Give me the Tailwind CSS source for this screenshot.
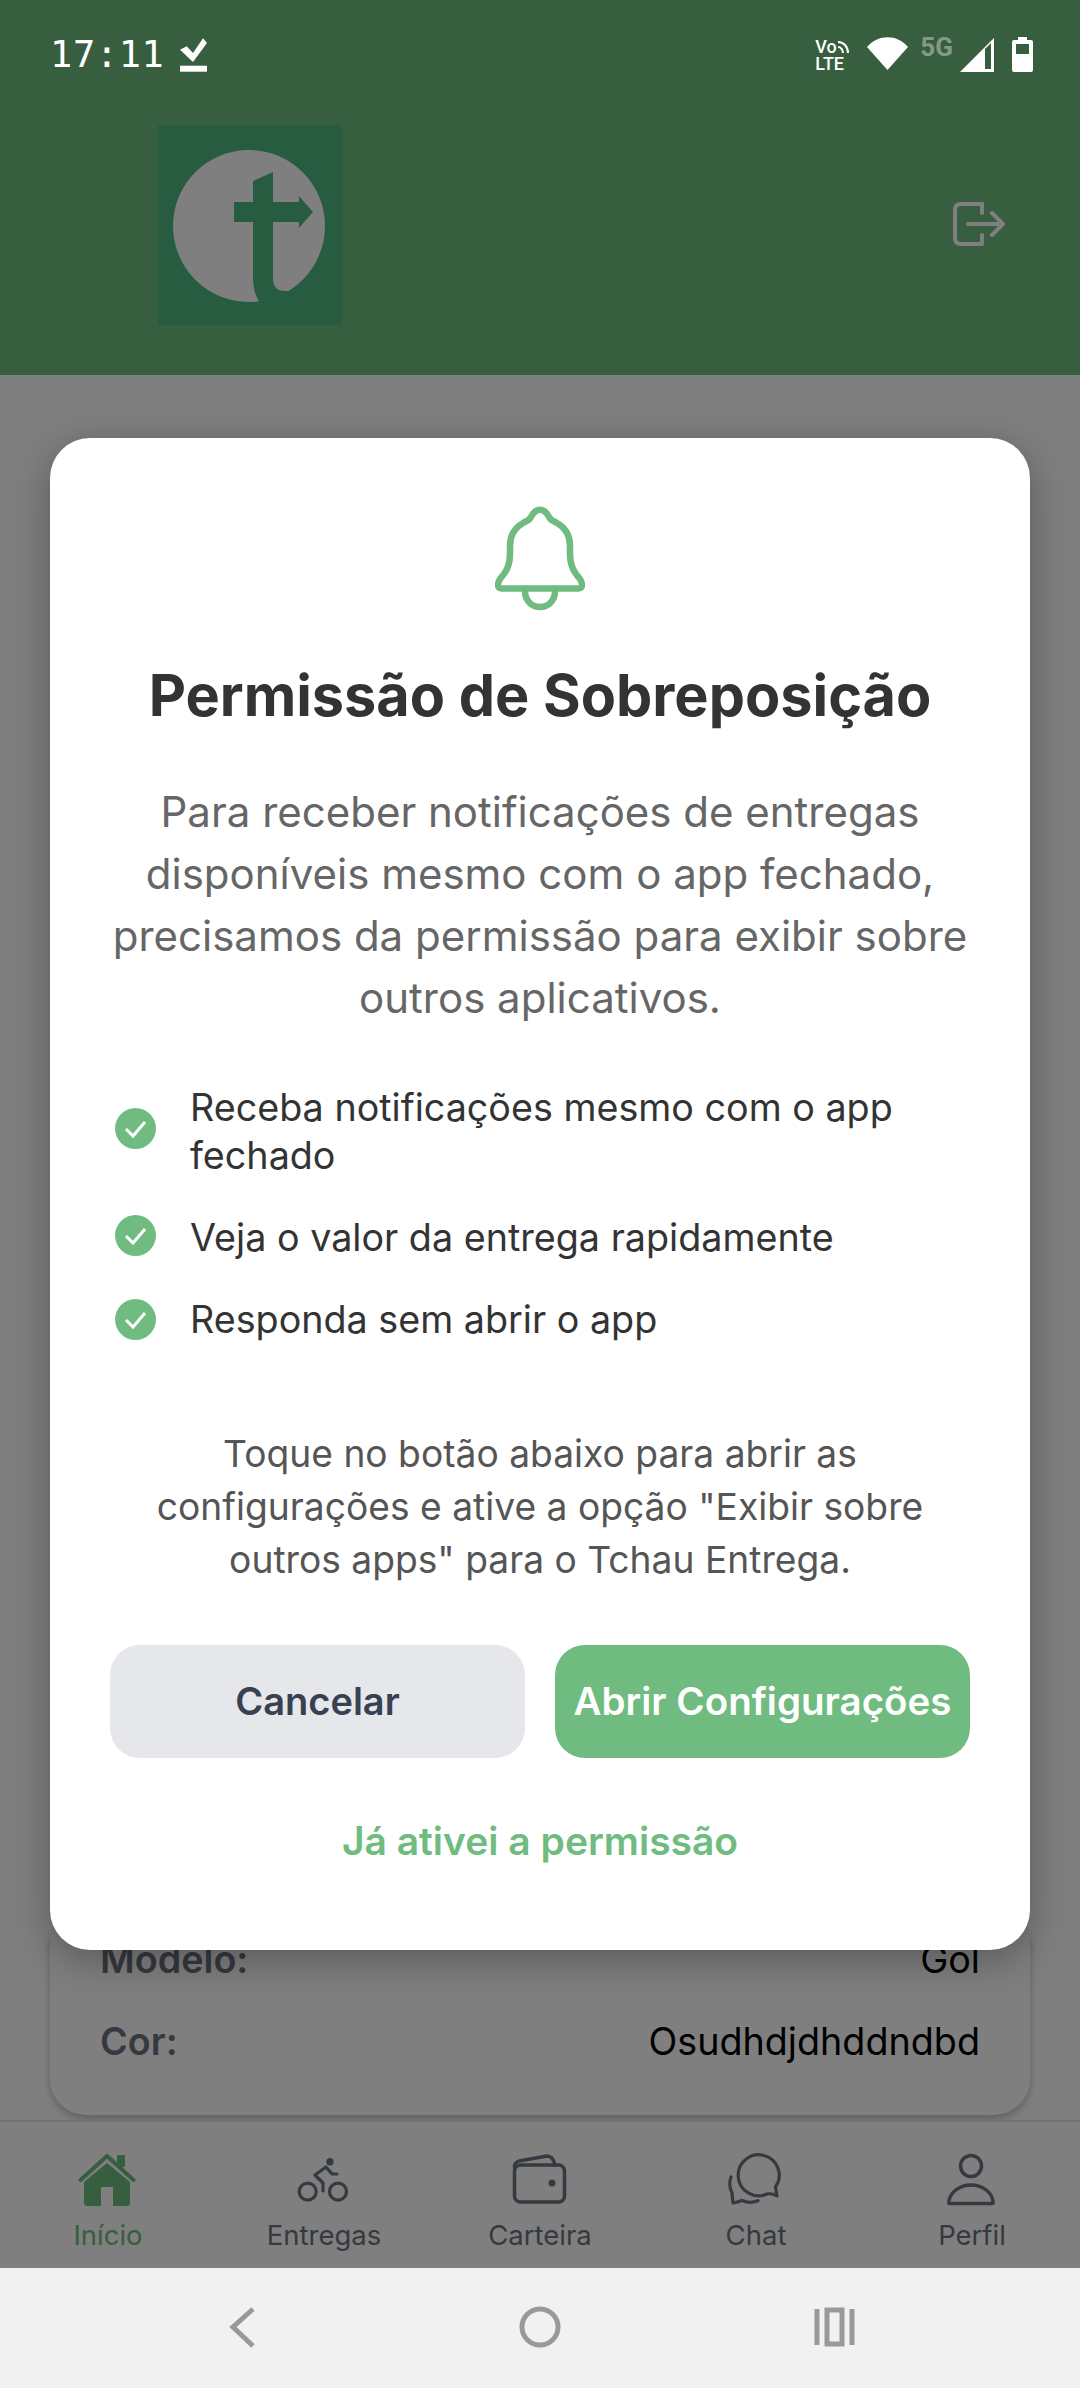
<!DOCTYPE html>
<html lang="pt-BR">
<head>
  <meta charset="UTF-8" />
  <meta name="viewport" content="width=device-width, initial-scale=1.0" />
  <title>Tchau Entrega</title>
  <script src="https://cdn.jsdelivr.net/npm/@tailwindcss/browser@4"></script>
</head>
<body class="bg-white font-['Inter',sans-serif]">
<div class="relative w-[1080px] h-[2388px] overflow-hidden flex flex-col bg-white">

  <!-- header -->
  <header class="h-[375px] shrink-0 bg-[#70bc80] flex items-start justify-between pl-[158px] pr-[75px] pt-[125px]">
    <svg class="w-[184px] h-[200px]" viewBox="0 0 184 200">
      <rect width="184" height="200" fill="#50b882"/>
      <circle cx="91" cy="101" r="76" fill="#ffffff"/>
      <path d="M95 56 L115 47 V77 H141 V71 L155 87 L141 103 V97 H115 V153 Q115 166 127 166 L140 166 L140 190 L102 190 L102 177 Q95 170 95 150 V97 H76 V77 H95 Z" fill="#50b882"/>
    </svg>
    <svg class="w-[52px] h-[44px] mt-[77px]" viewBox="0 0 52 44" fill="none" stroke="#ffffff" stroke-width="4" stroke-linecap="round" stroke-linejoin="round">
      <path d="M29 2 H8 Q2 2 2 8 V36 Q2 42 8 42 H29 V33"/>
      <path d="M29 2 V11"/>
      <path d="M15 22 H49 M39 11 L50 22 L39 33"/>
    </svg>
  </header>

  <!-- page behind the dialog -->
  <main class="flex-1 flex flex-col justify-end overflow-hidden bg-white px-[50px] pb-[5px]">
    <div class="rounded-b-[36px] bg-white shadow-[0_4px_8px_rgba(0,0,0,0.25)] px-[50px] pb-[50px] flex flex-col gap-[34px]">
      <div class="flex justify-between text-[37.7px] leading-[48px]">
        <span class="font-semibold text-[#6b7280]">Modelo:</span>
        <span class="text-black">Gol</span>
      </div>
      <div class="flex justify-between text-[37.7px] leading-[48px]">
        <span class="font-semibold text-[#6b7280]">Cor:</span>
        <span class="text-black">Osudhdjdhddndbd</span>
      </div>
    </div>
  </main>

  <!-- tab bar -->
  <nav class="h-[148px] shrink-0 bg-white border-t-2 border-[#e5e7eb] grid grid-cols-5 text-[27.5px] leading-[34px] text-[#6b7280]">
    <div class="flex flex-col items-center pt-[31px] gap-[9px] text-[#70bc80]">
      <svg class="w-[60px] h-[56px]" viewBox="0 0 60 56" fill="#70bc80">
        <path d="M2.5 27 L29 3 L55.5 27" fill="none" stroke="#70bc80" stroke-width="4" stroke-linecap="round" stroke-linejoin="round"/>
        <rect x="39" y="2" width="8" height="12" rx="1"/>
        <path d="M6 29 L29 10 L52 29 V50 Q52 53 49 53 H35 V34 H23 V53 H9 Q6 53 6 50 Z"/>
      </svg>
      <span>Início</span>
    </div>
    <div class="flex flex-col items-center pt-[31px] gap-[9px]">
      <svg class="w-[56px] h-[56px]" viewBox="0 0 56 56" fill="none" stroke="#6b7280" stroke-width="3.2" stroke-linecap="round" stroke-linejoin="round">
        <circle cx="11.7" cy="38.7" r="8.5"/>
        <circle cx="42" cy="38.7" r="8.5"/>
        <path d="M27 38 V30 L19 22 L30 14 L36 21 H41"/>
        <circle cx="34" cy="8.7" r="3.7" fill="#6b7280" stroke="none"/>
      </svg>
      <span>Entregas</span>
    </div>
    <div class="flex flex-col items-center pt-[31px] gap-[9px]">
      <svg class="w-[56px] h-[56px]" viewBox="0 0 56 56" fill="none" stroke="#6b7280" stroke-width="3.5" stroke-linejoin="round" stroke-linecap="round">
        <path d="M2.5 14 Q2 10 7 8 L35 3 Q41 3 43 12"/>
        <rect x="2.5" y="12" width="50" height="37" rx="6"/>
        <circle cx="40" cy="30" r="3.5" fill="#6b7280" stroke="none"/>
      </svg>
      <span>Carteira</span>
    </div>
    <div class="flex flex-col items-center pt-[31px] gap-[9px]">
      <svg class="w-[56px] h-[56px]" viewBox="0 0 56 56" fill="none" stroke="#6b7280" stroke-width="3.2" stroke-linejoin="round" stroke-linecap="round">
        <path d="M47.5 34 A20.5 20.5 0 1 0 39 41 Q44 40 49 43 Z"/>
        <path d="M3 24 Q0 32 4 40 L5 50 Q10 49 14 47.5 Q22 51 30 47.7"/>
      </svg>
      <span>Chat</span>
    </div>
    <div class="flex flex-col items-center pt-[31px] gap-[9px]">
      <svg class="w-[52px] h-[56px]" viewBox="0 0 52 56" fill="none" stroke="#6b7280" stroke-width="3.5" stroke-linejoin="round">
        <circle cx="25" cy="13" r="10.5"/>
        <path d="M2.8 50 C3 40 13 32 25 32 C37 32 47 40 47.2 50 Q47 50.5 46 50.5 H4 Q3 50.5 2.8 50 Z"/>
      </svg>
      <span>Perfil</span>
    </div>
  </nav>

  <!-- android nav bar -->
  <div class="relative z-20 h-[120px] shrink-0 bg-[#f1f1f1] flex items-center justify-center pb-[2px]">
    <svg class="w-[640px] h-[44px]" viewBox="0 0 640 44" fill="none" stroke="#999999" stroke-width="5">
      <path d="M33 4 L13 22 L33 41"/>
      <circle cx="320" cy="22" r="18"/>
      <path d="M597 4 V40 M632 4 V40"/>
      <rect x="607" y="5" width="15" height="34"/>
    </svg>
  </div>

  <!-- dim overlay + dialog -->
  <div class="absolute inset-0 z-10 bg-black/50 flex items-center justify-center">
    <section class="w-[980px] h-[1512px] bg-white rounded-[40px] shadow-[0_10px_40px_rgba(0,0,0,0.3)] px-[60px] pt-[66px] flex flex-col items-center">
      <svg class="w-[90px] h-[107px] shrink-0" viewBox="0 0 90 107" fill="none" stroke="#70bc80" stroke-width="6.5" stroke-linejoin="round" stroke-linecap="round">
        <path d="M45 5.7 C40 5.7 38 9 36 13 C34 17 31 17 28 19 C19 24 15 32 15 42 V50 C15 62 11 68 5 75 Q0 84 7 84.5 H83 Q90 84 85 75 C79 68 75 62 75 50 V42 C75 32 71 24 62 19 C59 17 56 17 54 13 C52 9 50 5.7 45 5.7 Z"/>
        <path d="M30 87 C30 97 37 103 45 103 C53 103 60 97 60 87"/>
      </svg>
      <h2 class="mt-[48px] text-[57.6px] leading-[72px] font-bold text-[#333333] whitespace-nowrap">Permissão de Sobreposição</h2>
      <p class="mt-[50px] text-[42px] leading-[62px] text-[#666666] text-center whitespace-nowrap">Para receber notificações de entregas<br>disponíveis mesmo com o app fechado,<br>precisamos da permissão para exibir sobre<br>outros aplicativos.</p>
      <ul class="mt-[54px] w-full flex flex-col gap-[34px] pl-[5px] text-[37.7px] leading-[48px] text-[#333333]">
        <li class="flex items-center gap-[34px]">
          <svg class="w-[41px] h-[41px] shrink-0 -mt-[5px]" viewBox="0 0 41 41"><circle cx="20.5" cy="20.5" r="20.5" fill="#70bc80"/><path d="M11 21 L18 28 L30 14" fill="none" stroke="#ffffff" stroke-width="3"/></svg>
          <span>Receba notificações mesmo com o app<br>fechado</span>
        </li>
        <li class="flex items-center gap-[34px]">
          <svg class="w-[41px] h-[41px] shrink-0 -mt-[3px]" viewBox="0 0 41 41"><circle cx="20.5" cy="20.5" r="20.5" fill="#70bc80"/><path d="M11 21 L18 28 L30 14" fill="none" stroke="#ffffff" stroke-width="3"/></svg>
          <span>Veja o valor da entrega rapidamente</span>
        </li>
        <li class="flex items-center gap-[34px]">
          <svg class="w-[41px] h-[41px] shrink-0" viewBox="0 0 41 41"><circle cx="20.5" cy="20.5" r="20.5" fill="#70bc80"/><path d="M11 21 L18 28 L30 14" fill="none" stroke="#ffffff" stroke-width="3"/></svg>
          <span>Responda sem abrir o app</span>
        </li>
      </ul>
      <p class="mt-[84px] text-[37.2px] leading-[53px] text-[#555555] text-center whitespace-nowrap">Toque no botão abaixo para abrir as<br>configurações e ative a opção "Exibir sobre<br>outros apps" para o Tchau Entrega.</p>
      <div class="mt-[59px] w-full flex gap-[30px]">
        <button class="flex-1 h-[113px] rounded-[30px] bg-[#e5e7eb] text-[38px] font-semibold text-[#374151]">Cancelar</button>
        <button class="flex-1 h-[113px] rounded-[30px] bg-[#70bc80] text-[38.5px] font-semibold text-white whitespace-nowrap">Abrir Configurações</button>
      </div>
      <button class="mt-[56px] text-[39px] leading-[54px] font-semibold text-[#70bc80]">Já ativei a permissão</button>
    </section>
  </div>

  <!-- status bar -->
  <div class="absolute z-20 top-0 left-0 w-full h-[100px] flex justify-between items-start pl-[50px] pr-[47px] pt-[33px] text-white">
    <div class="flex items-start gap-[16px]">
      <span class="font-['DejaVu_Sans_Mono',monospace] text-[37px] leading-[44px] tracking-[0.6px]">17:11</span>
      <svg class="w-[28px] h-[34px] mt-[5px]" viewBox="0 0 28 34" fill="#ffffff">
        <path d="M0 11.7 L6.7 8.3 L13 15 L23 0.3 L27 5 L13 24 Z"/>
        <rect x="0" y="27.7" width="27" height="6"/>
      </svg>
    </div>
    <div class="flex items-start">
      <div class="w-[38px] mt-[5px] font-['Roboto',sans-serif] font-medium text-[18px] leading-[17px]">
        <div class="flex items-center">Vo<svg class="w-[12px] h-[14px]" viewBox="0 0 12 14" fill="none" stroke="#ffffff" stroke-width="2"><path d="M1 2 C7 2 11 7 11 13 M1 7 C4 7 6 10 6 13"/></svg></div>
        <div>LTE</div>
      </div>
      <svg class="w-[41px] h-[33px] ml-[14px] mt-[4px]" viewBox="0 0 41 33" fill="#ffffff"><path d="M0 10 C11 -3 30 -3 41 10 L20.5 33 Z"/></svg>
      <span class="ml-[12px] mt-[2px] font-['Roboto',sans-serif] font-bold text-[26px] leading-[24px] text-white/40">5G</span>
      <svg class="w-[34px] h-[34px] ml-[7px] mt-[5px]" viewBox="0 0 34 34"><path d="M34 0 V34 H0 Z" fill="#ffffff"/><path d="M25 11 L31 5 V31 H25 Z" fill="#385e40"/></svg>
      <svg class="w-[21px] h-[35px] ml-[18px] mt-[4px]" viewBox="0 0 21 35"><path d="M6 0 H15 V3 H19 Q21 3 21 5 V33 Q21 35 19 35 H2 Q0 35 0 33 V5 Q0 3 2 3 H6 Z" fill="#ffffff"/><rect x="4" y="7" width="13" height="10" fill="#385e40"/></svg>
    </div>
  </div>
</div>
</body>
</html>
